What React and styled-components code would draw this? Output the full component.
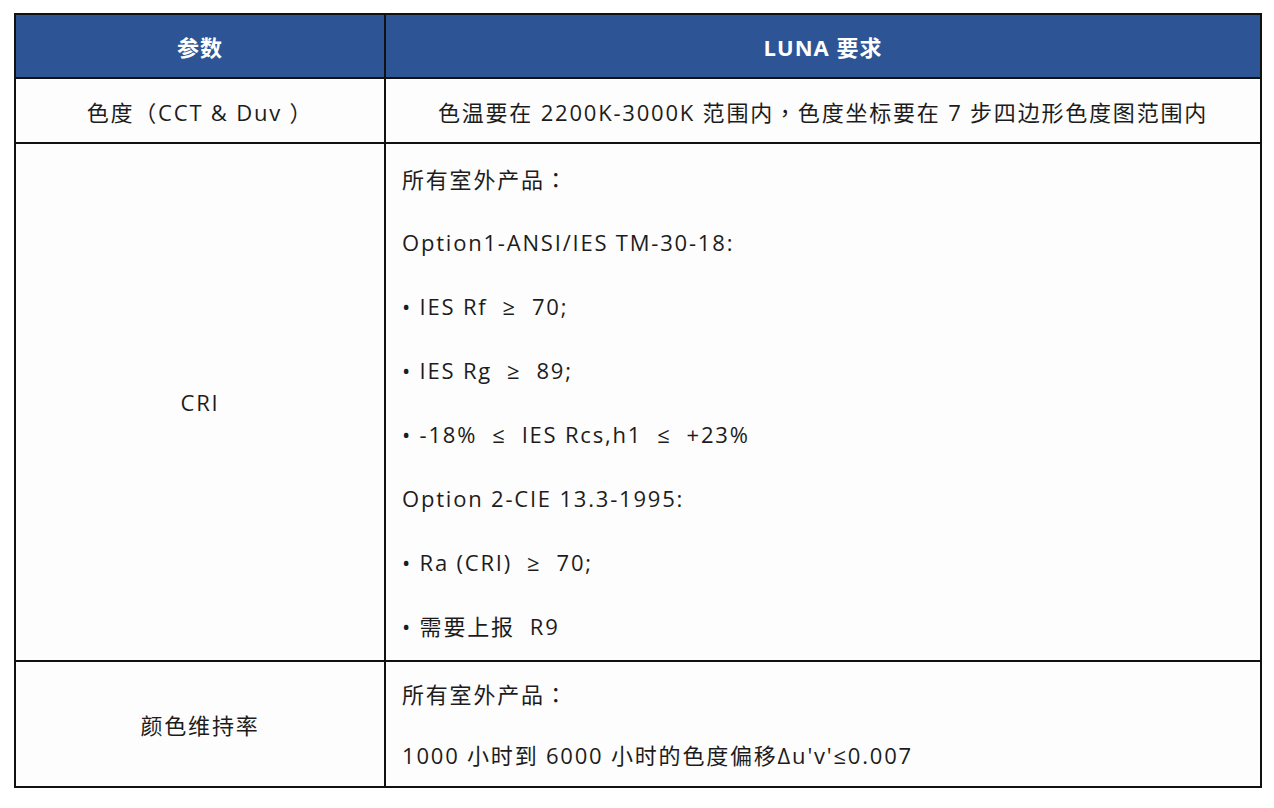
import React from "react";
import styled, { createGlobalStyle } from "styled-components";

const Global = createGlobalStyle`
  html, body { margin: 0; padding: 0; background: #ffffff; }
  body { font-family: "Open Sans", "Noto Sans CJK SC", sans-serif; color: #1c1c1c; }
`;

const Page = styled.div`
  padding: 13px 12px 20px 14px;
`;

const Table = styled.div`
  display: grid;
  grid-template-columns: 368px 874px;
  grid-template-rows: 62px 63px 516px 124px;
  gap: 2px;
  background: #111;
  border: 2px solid #111;
  width: max-content;
`;

const HeadCell = styled.div`
  background: #2d5595;
  color: #fff;
  font-weight: 700;
  font-size: 22px;
  letter-spacing: 1px;
  display: flex;
  align-items: center;
  justify-content: center;
`;

const Cell = styled.div`
  background: #fdfdfd;
  font-size: 22px;
  letter-spacing: 1.8px;
  display: flex;
  flex-direction: column;
  justify-content: center;
  align-items: ${(p) => (p.$left ? "flex-start" : "center")};
  padding: ${(p) => (p.$left ? "0 0 0 16px" : "0")};
`;

const Line = styled.div`
  height: ${(p) => p.$h || 64}px;
  line-height: ${(p) => p.$h || 64}px;
  white-space: pre;
`;

const Punct = styled.span`
  font-family: "Noto Sans CJK TC", sans-serif;
`;

const cri = [
  <>所有室外产品<Punct>：</Punct></>,
  "Option1-ANSI/IES TM-30-18:",
  "• IES Rf  ≥  70;",
  "• IES Rg  ≥  89;",
  "• -18%  ≤  IES Rcs,h1  ≤  +23%",
  "Option 2-CIE 13.3-1995:",
  "• Ra (CRI)  ≥  70;",
  "• 需要上报  R9",
];

export default function App() {
  return (
    <>
      <Global />
      <Page>
        <Table>
          <HeadCell>参数</HeadCell>
          <HeadCell>LUNA 要求</HeadCell>
          <Cell>色度（CCT &amp; Duv ）</Cell>
          <Cell>
            <span>
              色温要在 2200K-3000K 范围内<Punct>，</Punct>色度坐标要在 7 步四边形色度图范围内
            </span>
          </Cell>
          <Cell>CRI</Cell>
          <Cell $left>
            {cri.map((t, i) => (
              <Line key={i}>{t}</Line>
            ))}
          </Cell>
          <Cell>颜色维持率</Cell>
          <Cell $left>
            <Line $h={62}>所有室外产品<Punct>：</Punct></Line>
            <Line $h={62}>1000 小时到 6000 小时的色度偏移Δu'v'≤0.007</Line>
          </Cell>
        </Table>
      </Page>
    </>
  );
}
